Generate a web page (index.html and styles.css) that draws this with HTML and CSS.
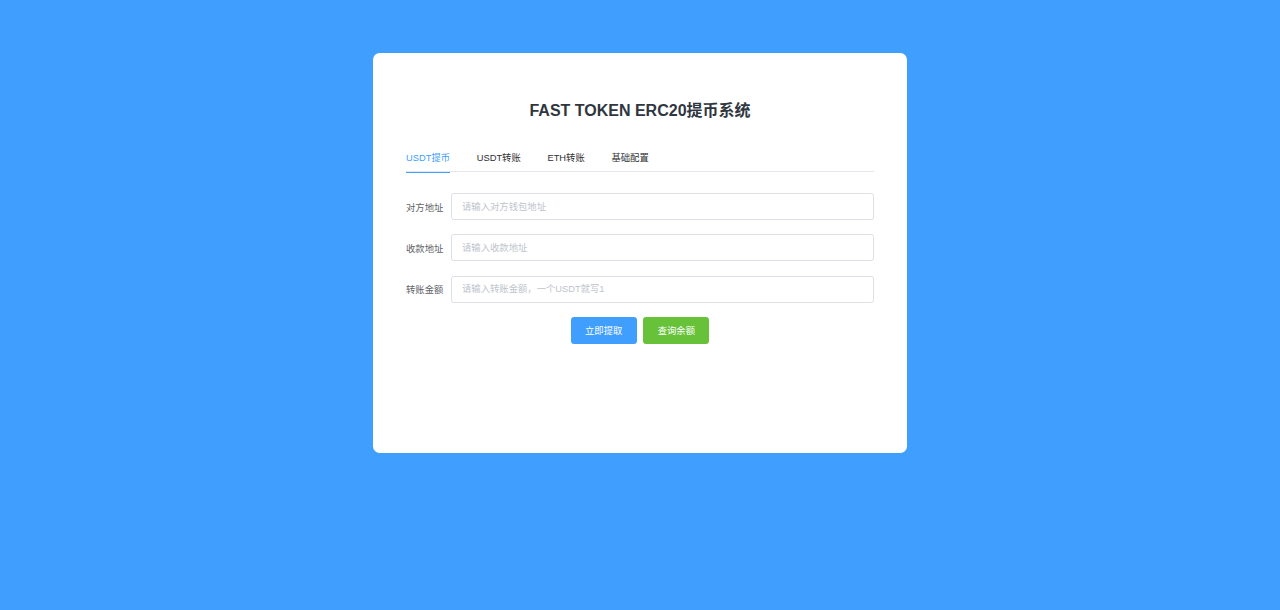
FILE: index.html
```html
<!DOCTYPE html>
<html lang="zh-CN">
<head>
<meta charset="utf-8">
<title>FAST TOKEN ERC20提币系统</title>
<link rel="stylesheet" href="styles.css">
</head>
<body>
<div class="page">
  <div class="card">
    <h2 class="title">FAST TOKEN ERC20提币系统</h2>
    <div class="tabs">
      <div class="tab active">USDT提币</div>
      <div class="tab">USDT转账</div>
      <div class="tab">ETH转账</div>
      <div class="tab">基础配置</div>
    </div>
    <form class="form">
      <div class="row">
        <label class="label">对方地址</label>
        <input class="input" type="text" placeholder="请输入对方钱包地址">
      </div>
      <div class="row">
        <label class="label">收款地址</label>
        <input class="input" type="text" placeholder="请输入收款地址">
      </div>
      <div class="row">
        <label class="label">转账金额</label>
        <input class="input" type="text" placeholder="请输入转账金额，一个USDT就写1">
      </div>
      <div class="actions">
        <button type="button" class="btn btn-primary">立即提取</button>
        <button type="button" class="btn btn-success">查询余额</button>
      </div>
    </form>
  </div>
</div>
</body>
</html>
```
FILE: styles.css
```css
* { box-sizing: border-box; }
html, body {
  margin: 0;
  padding: 0;
  height: 100%;
}
body {
  background: #409EFF;
  font-family: "Liberation Sans", Arial, "Noto Sans CJK SC", sans-serif;
  color: #303133;
}
.page {
  padding-top: 53px;
}
.card {
  width: 534px;
  height: 400px;
  margin: 0 auto;
  background: #fff;
  border-radius: 6.67px;
  padding: 47px 33px 0;
}
.title {
  margin: 0;
  font-size: 16px;
  line-height: 22px;
  font-weight: bold;
  text-align: center;
  color: #303640;
}
.tabs {
  margin-top: 23px;
  height: 27px;
  display: flex;
  border-bottom: 1.33px solid #E4E7ED;
}
.tab {
  position: relative;
  height: 27px;
  line-height: 27px;
  font-size: 9.33px;
  padding: 0 13.33px;
  color: #303133;
}
.tab:first-child { padding-left: 0; }
.tab.active { color: #409EFF; }
.tab.active::after {
  content: "";
  position: absolute;
  left: 0;
  right: 13.33px;
  bottom: -1.33px;
  height: 1.33px;
  background: #409EFF;
}
.form {
  margin: 21px 0 0;
}
.row {
  display: flex;
  align-items: center;
  margin-bottom: 14.33px;
}
.label {
  width: 45px;
  padding-right: 8px;
  text-align: right;
  font-size: 9.33px;
  color: #606266;
  white-space: nowrap;
}
.input {
  flex: 1;
  height: 27px;
  border: 1px solid #DCDFE6;
  border-radius: 2.67px;
  padding: 0 10px;
  font-size: 9.33px;
  font-family: inherit;
  color: #606266;
  outline: none;
  background: #fff;
}
.input::placeholder { color: #C0C4CC; }
.actions {
  display: flex;
  justify-content: center;
  gap: 6.67px;
}
.btn {
  height: 27px;
  padding: 0 13.33px;
  border: 1px solid transparent;
  border-radius: 2.67px;
  font-size: 9.33px;
  font-family: inherit;
  color: #fff;
  cursor: pointer;
}
.btn-primary { background: #409EFF; border-color: #409EFF; }
.btn-success { background: #67C23A; border-color: #67C23A; }
```
